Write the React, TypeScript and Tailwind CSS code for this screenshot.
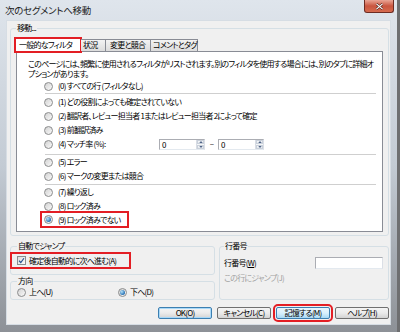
import React from "react"

const jp =
  "font-['Noto_Sans_CJK_JP','Noto_Sans',sans-serif] [font-feature-settings:'palt']"

const Radio = ({ checked = false }: { checked?: boolean }) => (
  <span className="flex h-[9px] w-[9px] shrink-0 items-center justify-center rounded-full border border-[#8b8c8d] bg-linear-to-br from-[#d2d2d2] to-[#fafafa]">
    {checked && (
      <span className="h-[5px] w-[5px] rounded-full bg-[radial-gradient(circle_at_35%_35%,#b6e3fa,#1a68b0_75%)]" />
    )}
  </span>
)

const Checkbox = () => (
  <span className="flex h-[9px] w-[9px] shrink-0 items-center justify-center border border-[#8b8c8d] bg-linear-to-br from-[#dcdcdc] to-[#fafafa]">
    <svg viewBox="0 0 8 8" className="h-[7px] w-[7px]">
      <path d="M1.2 4.3 L3.2 6.3 L6.8 1.4" fill="none" stroke="#25508f" strokeWidth="1.3" />
    </svg>
  </span>
)

const Arrow = ({ up }: { up?: boolean }) => (
  <svg viewBox="0 0 5 3" className="h-[2px] w-[4px]">
    <path d={up ? "M0 3 L2.5 0 L5 3 Z" : "M0 0 L2.5 3 L5 0 Z"} fill="#4d6185" />
  </svg>
)

const Spin = ({ value }: { value: string }) => (
  <div className="flex h-[11px] w-[46px] border border-[#abadb3] border-b-[#e3e9ef] border-r-[#dbdfe6] bg-white">
    <span className="flex-1 pl-[2px] leading-[9px]">{value}</span>
    <span className="flex w-[8px] flex-col gap-px border-l border-[#d8dde5] bg-[#f4f6f8]">
      <span className="flex flex-1 items-center justify-center border border-[#c9d0da] bg-linear-to-b from-[#f7f8fa] to-[#e3e8ee]">
        <Arrow up />
      </span>
      <span className="flex flex-1 items-center justify-center border border-[#c9d0da] bg-linear-to-b from-[#f7f8fa] to-[#e3e8ee]">
        <Arrow />
      </span>
    </span>
  </div>
)

const Row = ({ label, checked }: { label: string; checked?: boolean }) => (
  <div className="flex h-[14px] items-center gap-[5px] pl-[27px]">
    <Radio checked={checked} />
    <span>{label}</span>
  </div>
)

const Sep = ({ className = "" }: { className?: string }) => (
  <div className={`ml-[28px] mr-[6px] h-px bg-[#cfcfcf] ${className}`} />
)

const buttonStyles = {
  normal: "border-[#707070] from-[#f4f4f4] via-[#ebebeb] to-[#d3d3d3]",
  def: "border-[#3c7fb1] from-[#f4f4f4] via-[#ebebeb] to-[#d3d3d3] shadow-[inset_0_0_0_1px_#a8d8f8]",
  hot: "border-[#3c7fb1] from-[#eaf6fd] via-[#d9f0fc] to-[#a7d9f5] outline-2 outline-offset-[1px] outline-[#e31e24]",
}

const Btn = ({ label, kind = "normal" }: { label: string; kind?: keyof typeof buttonStyles }) => (
  <button
    className={`flex h-[12px] w-[54px] items-center justify-center rounded-[2px] border bg-linear-to-b leading-[10px] text-black ${buttonStyles[kind]}`}
  >
    {label}
  </button>
)

export default function App() {
  return (
    <div className={`flex h-[332px] w-[400px] whitespace-nowrap bg-[#6e6f71] text-[8px] leading-[10px] tracking-[-0.75px] text-black ${jp}`}>
      <div className="flex h-[332px] w-[397px] flex-col bg-linear-to-b from-[#dfe5ec] via-[#c3cbd4] to-[#8d9197]">
        {/* title bar */}
        <div className="flex h-[20px] shrink-0 justify-between">
          <span className="self-center pl-[5px] text-[9.5px] tracking-[-0.3px] text-[#1c1c1c]">次のセグメントへ移動</span>
          <span className="mr-[3px] flex h-[13px] w-[30px] items-center justify-center rounded-b-[3px] border border-t-0 border-[#6d2b22] bg-linear-to-b from-[#e9a596] via-[#c9553f] to-[#d66b4f]">
            <svg viewBox="0 0 10 8" className="h-[7px] w-[9px]">
              <path d="M1.5 1 L8.5 7 M8.5 1 L1.5 7" stroke="#4a1a12" strokeWidth="2.6" />
              <path d="M1.5 1 L8.5 7 M8.5 1 L1.5 7" stroke="#ffffff" strokeWidth="1.5" />
            </svg>
          </span>
        </div>

        {/* client area */}
        <div className="mx-[6px] flex h-[305px] shrink-0 flex-col border border-[#d6dde4] bg-[#f0f0f0] pl-[3px] pr-[1px] pt-[2px]">
          <fieldset className="rounded-[3px] border border-[#d5dfe5] px-[5px] pb-[3px] pt-[5px]">
            <legend className="px-px">移動...</legend>

            {/* tabs */}
            <div className="relative z-10 -mb-px flex h-[14px] items-end">
              <div className="-ml-px h-[14px] w-[66px] border border-b-0 border-[#898c95] bg-white pl-[3px] pt-[1px] outline-2 outline-offset-[-1px] outline-[#e31e24]">
                一般的なフィルタ
              </div>
              <div className="mb-px h-[12px] w-[25px] border border-b-0 border-l-0 border-[#898c95] bg-linear-to-b from-[#f3f3f3] to-[#dcdcdc] pl-[2px]">
                状況
              </div>
              <div className="mb-px h-[12px] w-[45px] border border-b-0 border-l-0 border-[#898c95] bg-linear-to-b from-[#f3f3f3] to-[#dcdcdc] pl-[4px]">
                変更と競合
              </div>
              <div className="mb-px h-[12px] w-[47px] border border-b-0 border-l-0 border-[#898c95] bg-linear-to-b from-[#f3f3f3] to-[#dcdcdc] pl-[2px]">
                コメントとタグ
              </div>
            </div>

            {/* tab panel */}
            <div className="flex h-[181px] flex-col border border-[#898c95] bg-white pt-[7px]">
              <p className="pl-[11px]">
                このページには、頻繁に使用されるフィルタがリストされます。別のフィルタを使用する場合には、別のタブに詳細オ
                <br />
                プションがあります。
              </p>
              <Row label="(0) すべての行 (フィルタなし)" />
              <Sep className="mb-[1px]" />
              <Row label="(1) どの役割によっても確定されていない" />
              <Row label="(2) 翻訳者、レビュー担当者 1またはレビュー担当者 2によって確定" />
              <Row label="(3) 前翻訳済み" />
              <div className="flex h-[14px] items-center pl-[27px]">
                <div className="flex w-[115px] items-center gap-[5px]">
                  <Radio />
                  <span>(4) マッチ率 (%):</span>
                </div>
                <Spin value="0" />
                <span className="w-[13px] text-center">–</span>
                <Spin value="0" />
              </div>
              <Sep className="mt-[3px]" />
              <Row label="(5) エラー" />
              <Row label="(6) マークの変更または競合" />
              <Sep className="mt-[1px]" />
              <Row label="(7) 繰り返し" />
              <Row label="(8) ロック済み" />
              <div className="flex pl-[25px]">
                <div className="flex h-[13px] w-[85px] items-center gap-[5px] pl-[2px] outline-2 outline-[#e31e24]">
                  <Radio checked />
                  <span>(9) ロック済みでない</span>
                </div>
              </div>
            </div>
          </fieldset>

          {/* lower groups */}
          <div className="mt-[5px] flex gap-[4px]">
            <div className="flex w-[205px] flex-col">
              <fieldset className="rounded-[3px] border border-[#d5dfe5] px-px pb-[7px] pt-[3px]">
                <legend className="ml-[5px] px-px">自動でジャンプ</legend>
                <div className="flex h-[13px] w-[117px] items-center gap-[3px] pl-[5px] outline-2 outline-[#e31e24]">
                  <Checkbox />
                  <span>確定後自動的に次へ進む(A)</span>
                </div>
              </fieldset>
              <fieldset className="mt-px rounded-[3px] border border-[#d5dfe5] pb-[2px] pl-[6px] pt-px">
                <legend className="px-px">方向</legend>
                <div className="flex h-[10px] items-center">
                  <div className="flex w-[101px] items-center gap-[3px]">
                    <Radio />
                    <span>上へ(U)</span>
                  </div>
                  <div className="flex items-center gap-[3px]">
                    <Radio checked />
                    <span>下へ(D)</span>
                  </div>
                </div>
              </fieldset>
            </div>

            <fieldset className="flex-1 rounded-[3px] border border-[#d5dfe5] pl-[4px] pr-[5px] pt-[6px]">
              <legend className="px-px">行番号</legend>
              <div className="flex h-[12px] items-center justify-between">
                <span>
                  行番号(<span className="underline">W</span>)
                </span>
                <span className="h-[12px] w-[68px] border border-[#abadb3] border-b-[#e3e9ef] border-r-[#dbdfe6] bg-white" />
              </div>
              <div className="mt-[4px] text-[#a3a3a3]">この行にジャンプ(J)</div>
            </fieldset>
          </div>

          {/* buttons */}
          <div className="mt-[7px] flex justify-end gap-[5px]">
            <Btn label="OK(O)" kind="def" />
            <Btn label="キャンセル(C)" />
            <Btn label="記憶する(M)" kind="hot" />
            <Btn label="ヘルプ(H)" />
          </div>
        </div>
      </div>
    </div>
  )
}
